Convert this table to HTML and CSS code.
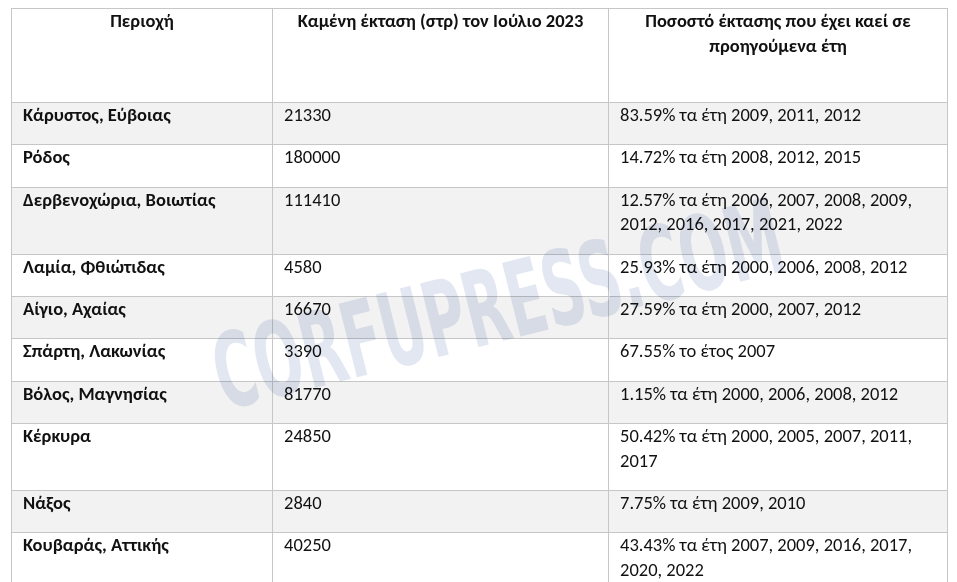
FILE: index.html
```html
<!DOCTYPE html>
<html lang="el">
<head>
<meta charset="utf-8">
<title>Καμένη έκταση</title>
<link rel="stylesheet" href="styles.css">
</head>
<body>
<div class="wrap">
<table class="fires">
  <colgroup>
    <col class="c1"><col class="c2"><col class="c3">
  </colgroup>
  <thead>
    <tr class="head">
      <th>Περιοχή</th>
      <th>Καμένη έκταση (στρ) τον Ιούλιο 2023</th>
      <th>Ποσοστό έκτασης που έχει καεί σε προηγούμενα έτη</th>
    </tr>
  </thead>
  <tbody>
    <tr class="alt"><td class="name">Κάρυστος, Εύβοιας</td><td>21330</td><td>83.59% τα έτη 2009, 2011, 2012</td></tr>
    <tr><td class="name">Ρόδος</td><td>180000</td><td>14.72% τα έτη 2008, 2012, 2015</td></tr>
    <tr class="alt"><td class="name">Δερβενοχώρια, Βοιωτίας</td><td>111410</td><td>12.57% τα έτη 2006, 2007, 2008, 2009, 2012, 2016, 2017, 2021, 2022</td></tr>
    <tr><td class="name">Λαμία, Φθιώτιδας</td><td>4580</td><td>25.93% τα έτη 2000, 2006, 2008, 2012</td></tr>
    <tr class="alt"><td class="name">Αίγιο, Αχαίας</td><td>16670</td><td>27.59% τα έτη 2000, 2007, 2012</td></tr>
    <tr><td class="name">Σπάρτη, Λακωνίας</td><td>3390</td><td>67.55% το έτος 2007</td></tr>
    <tr class="alt"><td class="name">Βόλος, Μαγνησίας</td><td>81770</td><td>1.15% τα έτη 2000, 2006, 2008, 2012</td></tr>
    <tr><td class="name">Κέρκυρα</td><td>24850</td><td>50.42% τα έτη 2000, 2005, 2007, 2011, 2017</td></tr>
    <tr class="alt"><td class="name">Νάξος</td><td>2840</td><td>7.75% τα έτη 2009, 2010</td></tr>
    <tr><td class="name">Κουβαράς, Αττικής</td><td>40250</td><td>43.43% τα έτη 2007, 2009, 2016, 2017, 2020, 2022</td></tr>
  </tbody>
</table>
<div class="watermark">CORFUPRESS.COM</div>
</div>
</body>
</html>
```
FILE: styles.css
```css
html, body {
  margin: 0;
  padding: 0;
  background: #ffffff;
}
body {
  padding: 8px 0 0 11px;
  font-family: Carlito, Calibri, "Noto Sans", "Liberation Sans", sans-serif;
  font-size: 18.5px;
  color: #111111;
  overflow: hidden;
  height: 582px;
  box-sizing: border-box;
}
.wrap {
  position: relative;
  width: 936px;
}
.fires {
  border-collapse: collapse;
  table-layout: fixed;
  width: 936px;
}
.c1 { width: 261px; }
.c2 { width: 336px; }
.c3 { width: 339px; }
.fires th,
.fires td {
  border: 1px solid #c6c6c6;
  vertical-align: top;
  padding: 0 11px 16.9px 11px;
  line-height: 24.5px;
  text-align: left;
  font-weight: 400;
}
.fires .head th {
  font-weight: 700;
  text-align: center;
  height: 76px;
  padding-left: 14px;
  padding-right: 14px;
}
.fires td.name {
  font-weight: 700;
}
.fires tr.alt td {
  background: #f2f2f2;
}
.watermark {
  position: absolute;
  left: 487px;
  top: 297px;
  transform: translate(-50%, -50%) rotate(-14deg) scaleX(0.6);
  font-family: "DejaVu Sans Condensed", "DejaVu Sans", sans-serif;
  font-weight: 700;
  font-size: 104px;
  line-height: 1;
  color: #e2e7f2;
  mix-blend-mode: multiply;
  white-space: nowrap;
  pointer-events: none;
}
```
